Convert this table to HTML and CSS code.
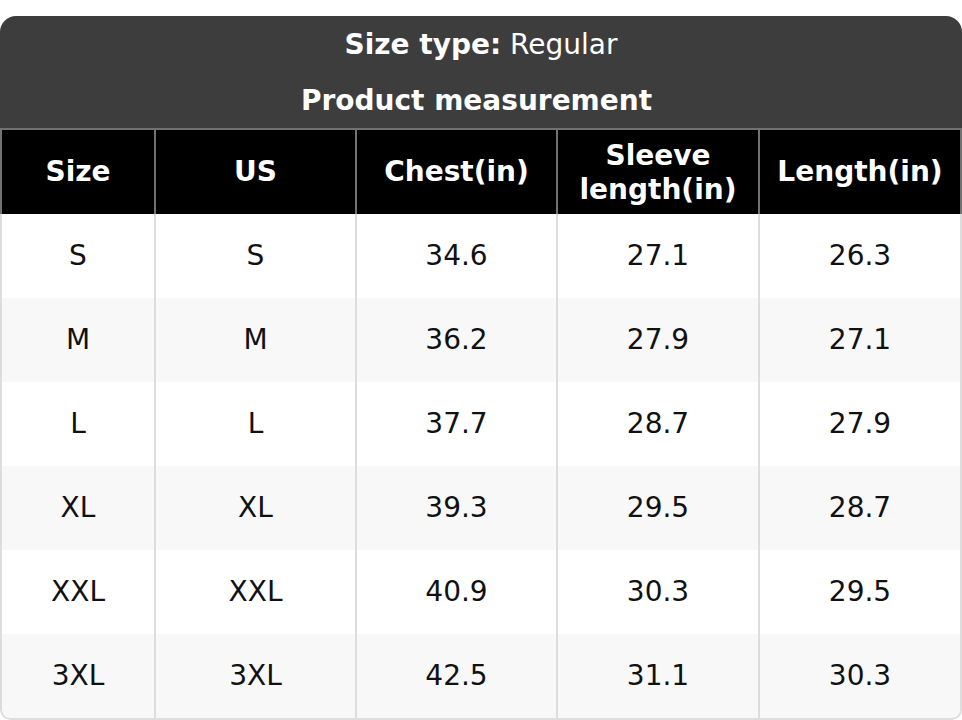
FILE: index.html
```html
<!DOCTYPE html>
<html>
<head>
<meta charset="utf-8">
<link rel="stylesheet" href="styles.css">
</head>
<body>
<div class="chart">
  <div class="caption">
    <div class="cap-row"><b>Size type:</b>&nbsp;Regular</div>
    <div class="cap-row cap-title"><b>Product measurement</b></div>
  </div>
  <div class="row head">
    <div class="cell">Size</div>
    <div class="cell">US</div>
    <div class="cell">Chest(in)</div>
    <div class="cell two-line">Sleeve<br>length(in)</div>
    <div class="cell">Length(in)</div>
  </div>
  <div class="row"><div class="cell">S</div><div class="cell">S</div><div class="cell">34.6</div><div class="cell">27.1</div><div class="cell">26.3</div></div>
  <div class="row alt"><div class="cell">M</div><div class="cell">M</div><div class="cell">36.2</div><div class="cell">27.9</div><div class="cell">27.1</div></div>
  <div class="row"><div class="cell">L</div><div class="cell">L</div><div class="cell">37.7</div><div class="cell">28.7</div><div class="cell">27.9</div></div>
  <div class="row alt"><div class="cell">XL</div><div class="cell">XL</div><div class="cell">39.3</div><div class="cell">29.5</div><div class="cell">28.7</div></div>
  <div class="row"><div class="cell">XXL</div><div class="cell">XXL</div><div class="cell">40.9</div><div class="cell">30.3</div><div class="cell">29.5</div></div>
  <div class="row alt last"><div class="cell">3XL</div><div class="cell">3XL</div><div class="cell">42.5</div><div class="cell">31.1</div><div class="cell">30.3</div></div>
</div>
</body>
</html>
```
FILE: styles.css
```css
html, body {
  margin: 0;
  padding: 0;
  background: #ffffff;
}
body {
  padding-top: 16px;
  font-family: "DejaVu Sans", "Liberation Sans", sans-serif;
  font-size: 28px;
  color: #111111;
}
.chart {
  width: 962px;
  border-radius: 16px 16px 10px 10px;
  overflow: hidden;
}
.caption {
  background: #3d3d3d;
  color: #ffffff;
  border-bottom: 2px solid #727272;
}
.cap-row {
  height: 56px;
  display: flex;
  align-items: center;
  justify-content: center;
}
.cap-title {
  padding-right: 9px;
}
.cap-row b {
  font-weight: bold;
}
.row {
  display: grid;
  grid-template-columns: 154px 201px 201px 202px 204px;
  height: 84px;
  background: #ffffff;
}
.row.alt {
  background: #f8f8f8;
}
.row.last {
  height: 86px;
}
.row.last .cell {
  border-bottom: 2px solid #dddddd;
}
.cell {
  display: flex;
  align-items: center;
  justify-content: center;
  text-align: center;
  border-left: 2px solid #dddddd;
  line-height: 1.2;
}
.cell:last-child {
  border-right: 2px solid #dddddd;
}
.two-line {
  padding-top: 2px;
}
.row.last .cell:first-child {
  border-bottom-left-radius: 10px;
}
.row.last .cell:last-child {
  border-bottom-right-radius: 10px;
}
.row.head {
  background: #000000;
  color: #ffffff;
  font-weight: bold;
}
.row.head .cell {
  border-left-color: #727272;
}
.row.head .cell:last-child {
  border-right-color: #727272;
}
```
